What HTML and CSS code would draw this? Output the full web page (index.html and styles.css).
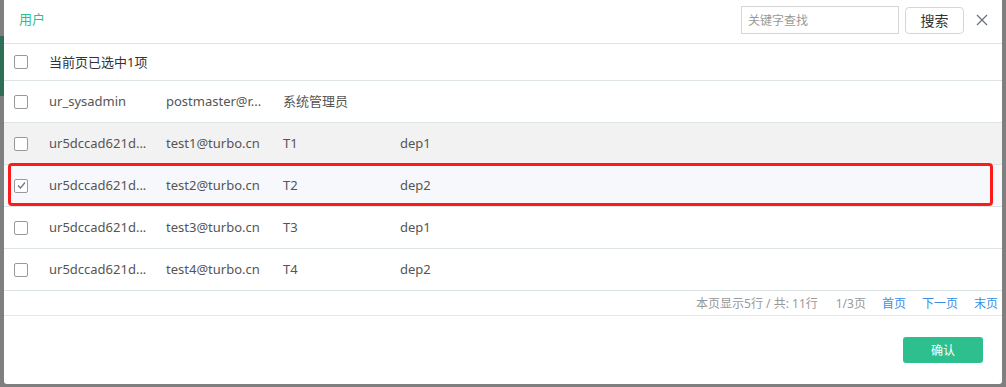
FILE: index.html
```html
<!DOCTYPE html>
<html lang="zh-CN">
  <head>
    <meta charset="UTF-8" />
    <title>用户</title>
    <link rel="stylesheet" href="styles.css">
  </head>
  <body>
    <div class="backdrop-strip"></div>
    <div class="dialog">
      <div class="dialog-header">
        <span class="dialog-title">用户</span>
        <div class="search">
          <input type="text" class="search-input" placeholder="关键字查找" />
          <button class="search-btn">搜索</button>
          <span class="close">
            <svg width="12" height="12" viewBox="0 0 12 12">
              <path d="M1 1 L11 11 M11 1 L1 11" stroke="#6b7280" stroke-width="1.3" fill="none" />
            </svg>
          </span>
        </div>
      </div>

      <div class="select-all">
        <span class="checkbox"></span>
        <span>当前页已选中1项</span>
      </div>

      <div class="rows">
        <div class="row">
          <span class="checkbox"></span>
          <span class="cell">ur_sysadmin</span>
          <span class="cell">postmaster@r...</span>
          <span class="cell">系统管理员</span>
          <span class="cell"></span>
        </div>
        <div class="row hover">
          <span class="checkbox"></span>
          <span class="cell">ur5dccad621d...</span>
          <span class="cell">test1@turbo.cn</span>
          <span class="cell">T1</span>
          <span class="cell">dep1</span>
        </div>
        <div class="row selected">
          <span class="checkbox checked">
            <svg width="11" height="11" viewBox="0 0 11 11">
              <path d="M2 5.5 L4.5 8 L9 2.5" stroke="#6b7280" stroke-width="1.2" fill="none" />
            </svg>
          </span>
          <span class="cell">ur5dccad621d...</span>
          <span class="cell">test2@turbo.cn</span>
          <span class="cell">T2</span>
          <span class="cell">dep2</span>
          <div class="mark"></div>
        </div>
        <div class="row">
          <span class="checkbox"></span>
          <span class="cell">ur5dccad621d...</span>
          <span class="cell">test3@turbo.cn</span>
          <span class="cell">T3</span>
          <span class="cell">dep1</span>
        </div>
        <div class="row">
          <span class="checkbox"></span>
          <span class="cell">ur5dccad621d...</span>
          <span class="cell">test4@turbo.cn</span>
          <span class="cell">T4</span>
          <span class="cell">dep2</span>
        </div>
      </div>

      <div class="pager">
        <span class="pager-info">本页显示5行 / 共: 11行</span>
        <span class="pager-info">1/3页</span>
        <a class="pager-link">首页</a>
        <a class="pager-link">下一页</a>
        <a class="pager-link">末页</a>
      </div>

      <div class="dialog-footer">
        <button class="confirm">确认</button>
      </div>
    </div>
  </body>
</html>
```

FILE: styles.css
```css
body {
  margin: 0;
  background-color: #7f7f7f;
  font-family: "Noto Sans", "Noto Sans CJK SC", sans-serif;
  font-size: 13px;
  color: #555;
  overflow: hidden;
}

.backdrop-strip {
  position: absolute;
  left: 0;
  top: 36px;
  width: 4px;
  height: 60px;
  background-color: #2e6e55;
}

.dialog {
  position: relative;
  margin-left: 4px;
  width: 998px;
  height: 384px;
  background-color: #fff;
  border-radius: 0 0 3px 3px;
}

.dialog-header {
  display: flex;
  align-items: center;
  justify-content: space-between;
  height: 40px;
  padding: 0 14px 3px 15px;
  border-bottom: 1px solid #dde4e4;
}

.dialog-title {
  color: #2dbf8e;
  font-size: 13px;
  margin-top: -3px;
}

.search {
  display: flex;
  align-items: center;
}

.search-input {
  width: 158px;
  height: 28px;
  box-sizing: border-box;
  border: 1px solid #d6d6d6;
  padding: 0 6px;
  font-family: inherit;
  font-size: 12px;
  color: #333;
}

.search-input::placeholder {
  color: #999;
}

.search-btn {
  margin-left: 6px;
  width: 59px;
  height: 27px;
  border: 1px solid #d6d6d6;
  border-radius: 4px;
  background-color: #fff;
  font-family: inherit;
  font-size: 14px;
  color: #333;
  padding: 0;
}

.close {
  display: flex;
  margin-left: 12px;
}

.checkbox {
  display: inline-flex;
  align-items: center;
  justify-content: center;
  width: 14px;
  height: 14px;
  box-sizing: border-box;
  border: 1px solid #999;
  border-radius: 2px;
  background-color: #fff;
  flex-shrink: 0;
  margin-right: 21px;
}

.select-all {
  display: flex;
  align-items: center;
  height: 35px;
  padding: 0 0 1px 10px;
  color: #333;
  border-bottom: 1px solid #dde4e4;
}

.row {
  position: relative;
  display: flex;
  align-items: center;
  height: 41px;
  padding-left: 10px;
  border-bottom: 1px solid #dde4e4;
}

.row.hover {
  background-color: #f2f2f2;
}

.row.selected {
  background-color: #f6f8fc;
}

.cell {
  width: 117px;
  white-space: nowrap;
  margin-top: -2px;
}

.mark {
  position: absolute;
  left: 4px;
  top: -2px;
  width: 979px;
  height: 37px;
  border: 3px solid #ff1a1a;
  border-radius: 4px;
}

.pager {
  display: flex;
  justify-content: flex-end;
  align-items: center;
  gap: 16px;
  height: 24px;
  padding-right: 4px;
  font-size: 12px;
  border-bottom: 1px solid #e6e6e6;
}

.pager-info {
  color: #999;
}

.pager-info + .pager-info {
  margin-left: 2px;
}

.pager-link {
  color: #3a8ee6;
}

.dialog-footer {
  display: flex;
  justify-content: flex-end;
  padding: 21px 19px 0 0;
}

.confirm {
  width: 80px;
  height: 26px;
  border: none;
  border-radius: 3px;
  background-color: #2dbf8e;
  color: #fff;
  font-family: inherit;
  font-size: 12px;
}
```
